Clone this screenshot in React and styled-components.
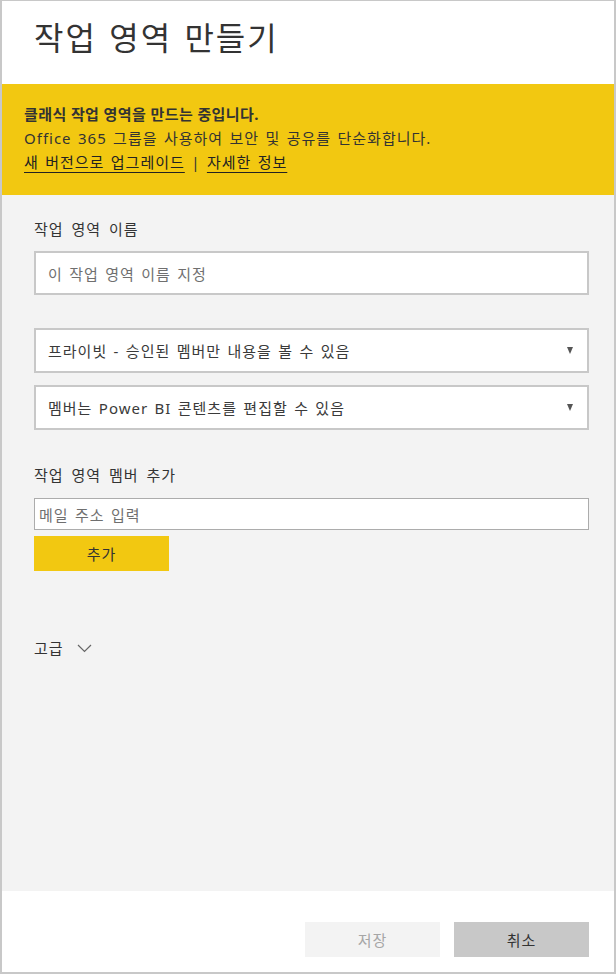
import React from "react";
import styled, { createGlobalStyle } from "styled-components";

const GlobalStyle = createGlobalStyle`
  body {
    margin: 0;
    font-family: "Noto Sans", "Noto Sans CJK KR", sans-serif;
    color: #333;
  }
  * { box-sizing: border-box; }
`;

const Frame = styled.div`
  width: 616px;
  height: 974px;
  border: solid #c8c8c8;
  border-width: 1px 2px 2px 2px;
  display: flex;
  flex-direction: column;
  background: #fff;
`;

const Header = styled.div`
  height: 83px;
  padding: 14px 0 0 32px;
`;

const Title = styled.h1`
  margin: 0;
  font-size: 32px;
  font-weight: 400;
  line-height: 46px;
  letter-spacing: 2px;
  word-spacing: 2px;
  color: #333;
`;

const Banner = styled.div`
  height: 111px;
  background: #f2c811;
  padding: 18px 22px 0 22px;
  font-size: 15px;
  line-height: 24px;
  letter-spacing: 1px;
  word-spacing: 1.5px;
  color: #333;
`;

const Strong = styled.div`
  font-weight: 700;
  letter-spacing: 0.4px;
  word-spacing: 0;
`;

const Link = styled.a`
  color: #222;
  text-decoration: underline;
  text-underline-offset: 4px;
  cursor: pointer;
`;

const Body = styled.div`
  flex: 1;
  background: #f3f3f3;
  padding: 24px 25px 0 32px;
  display: flex;
  flex-direction: column;
  letter-spacing: 1px;
  word-spacing: 1.5px;
`;

const Label = styled.div`
  font-size: 15px;
  line-height: 20px;
  color: #333;
  word-spacing: 3px;
  margin-top: ${(p) => p.$top || 0}px;
`;

const Field = styled.div`
  height: ${(p) => p.$h}px;
  background: #fff;
  border: ${(p) => (p.$thin ? "1px solid #acacac" : "2px solid #c8c8c8")};
  margin-top: ${(p) => p.$top}px;
  padding: 0 14px 0 ${(p) => (p.$thin ? 4 : 12)}px;
  display: flex;
  align-items: center;
  justify-content: space-between;
  font-size: 15px;
  color: ${(p) => (p.$placeholder ? "#6f6f6f" : "#3a3a3a")};
`;

const Arrow = styled.span`
  width: 0;
  height: 0;
  border-left: 3.5px solid transparent;
  border-right: 3.5px solid transparent;
  border-top: 7px solid #555;
`;

const Button = styled.button`
  width: 135px;
  height: 35px;
  border: none;
  font-family: inherit;
  font-size: 15px;
  letter-spacing: 1px;
  background: ${(p) => p.$bg};
  color: ${(p) => p.$color};
  padding: 0;
`;

const AddButton = styled(Button)`
  margin-top: 6px;
`;

const Advanced = styled.div`
  margin-top: 67px;
  display: flex;
  align-items: center;
  gap: 13px;
  font-size: 15px;
  line-height: 20px;
  color: #333;
`;

const Footer = styled.div`
  height: 81px;
  padding: 31px 25px 0 0;
  display: flex;
  justify-content: flex-end;
  gap: 14px;
`;

export default function App() {
  return (
    <>
      <GlobalStyle />
      <Frame>
        <Header>
          <Title>작업 영역 만들기</Title>
        </Header>
        <Banner>
          <Strong>클래식 작업 영역을 만드는 중입니다.</Strong>
          <div>Office 365 그룹을 사용하여 보안 및 공유를 단순화합니다.</div>
          <div>
            <Link>새 버전으로 업그레이드</Link> | <Link>자세한 정보</Link>
          </div>
        </Banner>
        <Body>
          <Label>작업 영역 이름</Label>
          <Field $h={44} $top={12} $placeholder>
            이 작업 영역 이름 지정
          </Field>
          <Field $h={45} $top={33}>
            프라이빗 - 승인된 멤버만 내용을 볼 수 있음
            <Arrow />
          </Field>
          <Field $h={45} $top={12}>
            멤버는 Power BI 콘텐츠를 편집할 수 있음
            <Arrow />
          </Field>
          <Label $top={35}>작업 영역 멤버 추가</Label>
          <Field $h={32} $top={13} $thin $placeholder>
            메일 주소 입력
          </Field>
          <AddButton $bg="#f2c811" $color="#333">
            추가
          </AddButton>
          <Advanced>
            고급
            <svg width="15" height="9" viewBox="0 0 15 9">
              <path d="M1 1 L7.5 7.5 L14 1" fill="none" stroke="#666" strokeWidth="1.2" />
            </svg>
          </Advanced>
        </Body>
        <Footer>
          <Button $bg="#f3f3f3" $color="#a6a6a6">
            저장
          </Button>
          <Button $bg="#c8c8c8" $color="#333">
            취소
          </Button>
        </Footer>
      </Frame>
    </>
  );
}
